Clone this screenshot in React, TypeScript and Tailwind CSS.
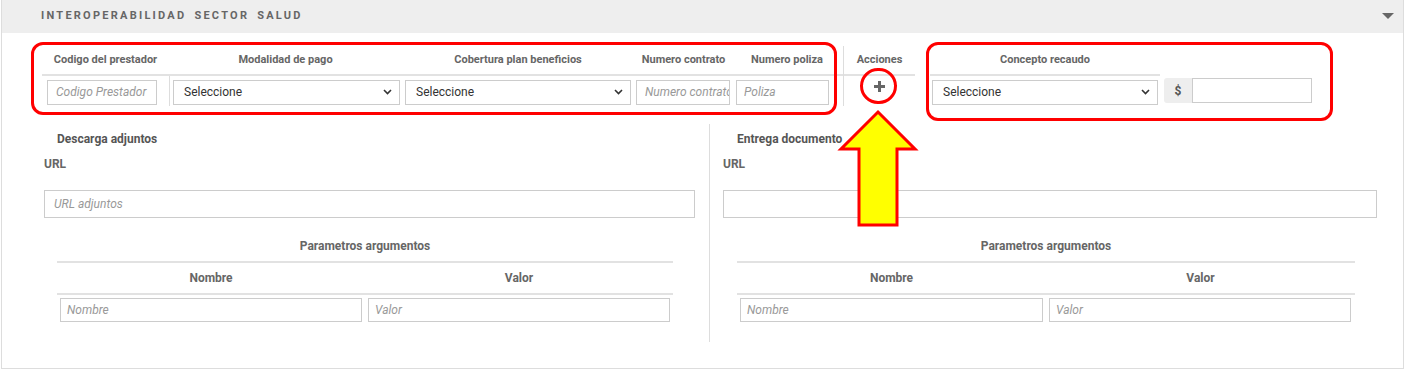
import React from "react";

function Chevron() {
  return (
    <svg className="absolute right-[8px] top-[10px]" width="9" height="6" viewBox="0 0 9 6">
      <path d="M1 1 L4.5 4.5 L8 1" fill="none" stroke="#333" strokeWidth="1.6" />
    </svg>
  );
}

function Select({ w }: { w: string }) {
  return (
    <div className={`relative ${w} h-[25px]`}>
      <select className="w-full h-full appearance-none border border-[#ccc] bg-white pl-[10px] text-[12px] text-[#333] outline-none">
        <option>Seleccione</option>
      </select>
      <Chevron />
    </div>
  );
}

function Field({ w, h, ph, pl }: { w: string; h: string; ph: string; pl: string }) {
  return (
    <input
      placeholder={ph}
      className={`${w} ${h} ${pl} border border-[#ccc] bg-white text-[12px] italic text-[#333] placeholder:text-[#999] outline-none`}
    />
  );
}

function ParamTable({ w, ml, nW, vW }: { w: string; ml: string; nW: string; vW: string }) {
  return (
    <div className={`${w} ${ml} mt-[20px]`}>
      <div className="h-[25px] leading-[16px] text-center border-b-2 border-[#e2e2e2] text-[12px] font-bold text-[#666]">
        Parametros argumentos
      </div>
      <div className="h-[32px] grid grid-cols-2 items-center border-b-2 border-[#e2e2e2] text-[12px] font-bold text-[#666] text-center">
        <div>Nombre</div>
        <div>Valor</div>
      </div>
      <div className="flex gap-[6px] pl-[3px] mt-[3px]">
        <Field w={nW} h="h-[24px]" ph="Nombre" pl="pl-[6px]" />
        <Field w={vW} h="h-[24px]" ph="Valor" pl="pl-[6px]" />
      </div>
    </div>
  );
}

export default function App() {
  return (
    <div className="relative w-[1407px] h-[372px] bg-white overflow-hidden font-[Roboto,Arial,sans-serif]">
      <div className="ml-px w-[1403px] h-[369px] border-x border-b border-[#ddd]">
        <div className="h-[33px] bg-[#eeeeee] flex items-center justify-between pl-[39px] pr-[9px]">
          <span className="text-[11px] font-bold tracking-[2.25px] text-[#666] [word-spacing:3px]">
            INTEROPERABILIDAD SECTOR SALUD
          </span>
          <svg width="12" height="6" viewBox="0 0 12 6" className="-mt-[1px]">
            <path d="M0 0 L12 0 L6 6 Z" fill="#666" />
          </svg>
        </div>

        {/* top row */}
        <div className="flex items-start pl-[40px] pt-[13px]">
          <div className="w-[127px]">
            <div className="h-[28px] flex items-center justify-center text-[11px] font-bold text-[#666] whitespace-nowrap border-b-2 border-[#e2e2e2] box-content">
              Codigo del prestador
            </div>
            <div className="h-[30px] pl-[5px] pt-[3px]">
              <Field w="w-[110px]" h="h-[25px]" ph="Codigo Prestador" pl="pl-[8px]" />
            </div>
          </div>
          <div className="w-[233px]">
            <div className="h-[28px] flex items-center justify-center text-[11px] font-bold text-[#666] border-b-2 border-[#e2e2e2] box-content">
              Modalidad de pago
            </div>
            <div className="h-[30px] pl-[3px] pt-[3px] border-l border-[#ddd]">
              <Select w="w-[227px]" />
            </div>
          </div>
          <div className="w-[232px]">
            <div className="h-[28px] flex items-center justify-center text-[11px] font-bold text-[#666] border-b-2 border-[#e2e2e2] box-content">
              Cobertura plan beneficios
            </div>
            <div className="h-[30px] pl-[3px] pt-[3px]">
              <Select w="w-[226px]" />
            </div>
          </div>
          <div className="w-[99px]">
            <div className="h-[28px] flex items-center justify-center text-[11px] font-bold text-[#666] border-b-2 border-[#e2e2e2] box-content">
              Numero contrato
            </div>
            <div className="h-[30px] pl-[2px] pt-[3px]">
              <Field w="w-[94px]" h="h-[25px]" ph="Numero contrato" pl="pl-[8px]" />
            </div>
          </div>
          <div className="w-[110px]">
            <div className="h-[28px] flex items-center justify-center pr-[2px] text-[11px] font-bold text-[#666] border-b-2 border-[#e2e2e2] box-content">
              Numero poliza
            </div>
            <div className="h-[30px] pl-[3px] pt-[3px]">
              <Field w="w-[93px]" h="h-[25px]" ph="Poliza" pl="pl-[7px]" />
            </div>
          </div>
          <div className="w-[72px] border-l border-[#ddd]">
            <div className="h-[28px] flex items-center justify-center text-[11px] font-bold text-[#666] border-b-2 border-[#e2e2e2] box-content">
              Acciones
            </div>
            <div className="h-[30px] flex justify-center pt-[5px]">
              <svg width="11" height="11" viewBox="0 0 11 11">
                <path d="M4 0 H7 V4 H11 V7 H7 V11 H4 V7 H0 V4 H4 Z" fill="#666" />
              </svg>
            </div>
          </div>
          <div className="w-[230px] ml-[15px]">
            <div className="h-[28px] flex items-center justify-center text-[11px] font-bold text-[#666] border-b-2 border-[#e2e2e2] box-content">
              Concepto recaudo
            </div>
            <div className="h-[30px] pl-[2px] pt-[3px]">
              <Select w="w-[226px]" />
            </div>
          </div>
          <div className="ml-[4px] mt-[32px] flex h-[25px]">
            <div className="w-[28px] h-full bg-[#eee] rounded-l-[3px] flex items-center justify-center text-[12px] font-bold text-[#555]">
              $
            </div>
            <input className="w-[120px] h-full border border-[#ccc] bg-white outline-none" />
          </div>
        </div>

        {/* bottom */}
        <div className="flex mt-[18px]">
          <div className="w-[707px] h-[218px] pl-[42px]">
            <div className="pt-[7px] pl-[13px] leading-[16px] text-[12px] font-bold text-[#555]">Descarga adjuntos</div>
            <div className="mt-[9px] leading-[16px] text-[12px] font-bold text-[#666]">URL</div>
            <div className="mt-[18px]">
              <Field w="w-[651px]" h="h-[28px]" ph="URL adjuntos" pl="pl-[9px]" />
            </div>
            <ParamTable w="w-[616px]" ml="ml-[13px]" nW="w-[302px]" vW="w-[302px]" />
          </div>
          <div className="w-[694px] h-[218px] border-l border-[#ddd] pl-[13px]">
            <div className="pt-[7px] pl-[14px] leading-[16px] text-[12px] font-bold text-[#555]">Entrega documento</div>
            <div className="mt-[9px] leading-[16px] text-[12px] font-bold text-[#666]">URL</div>
            <div className="mt-[18px]">
              <Field w="w-[654px]" h="h-[28px]" ph="" pl="pl-[9px]" />
            </div>
            <ParamTable w="w-[618px]" ml="ml-[14px]" nW="w-[303px]" vW="w-[302px]" />
          </div>
        </div>
      </div>

      {/* annotations */}
      <div className="absolute left-[31px] top-[42px] w-[806px] h-[73px] border-[3px] border-[#ff0000] rounded-[12px]" />
      <div className="absolute left-[926px] top-[42px] w-[407px] h-[79px] border-[3px] border-[#ff0000] rounded-[12px]" />
      <div className="absolute left-[860px] top-[68px] w-[37px] h-[36px] border-[3px] border-[#ff0000] rounded-full" />
      <svg className="absolute left-[836px] top-[106px]" width="84" height="124" viewBox="836 106 84 124">
        <polygon
          points="878,112 915,149 897,149 897,225 859,225 859,149 841,149"
          fill="#ffff00"
          stroke="#ff0000"
          strokeWidth="3"
          strokeLinejoin="miter"
        />
      </svg>
    </div>
  );
}
